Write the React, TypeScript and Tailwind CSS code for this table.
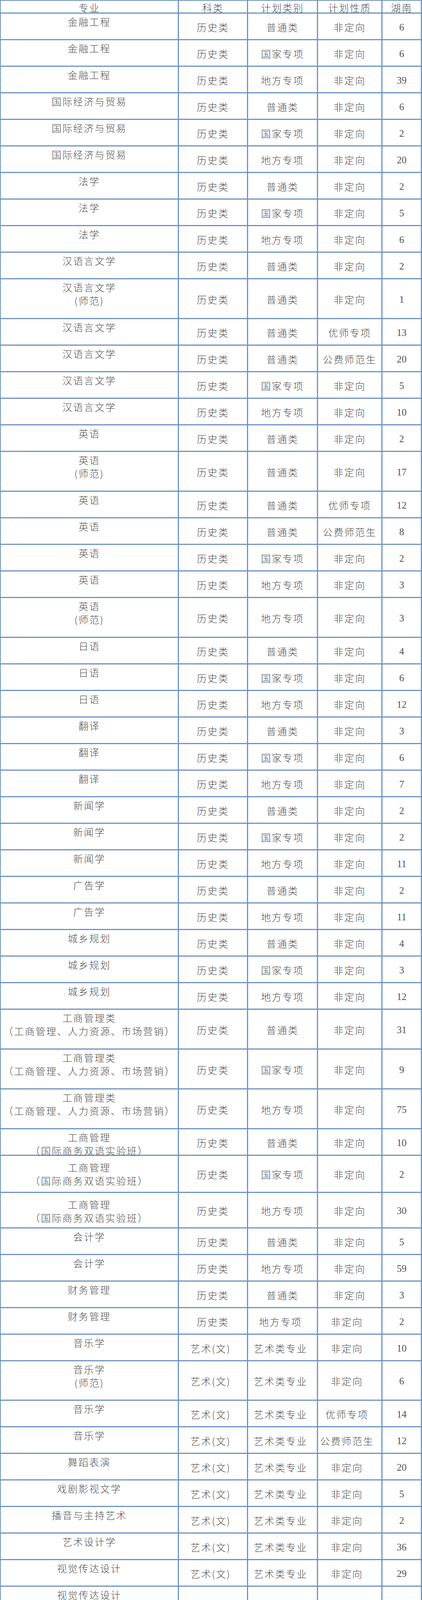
type Row = {
  name: string;
  sub?: string;
  kl: string;
  lb: string;
  xz: string;
  n: number;
  h?: number;
  lower?: boolean;
  shift?: "all" | "right";
};

const heightClass: Record<number, string> = {
  68: "h-[68px]",
  91: "h-[91px]",
  95: "h-[95px]",
  101: "h-[101px]",
  102: "h-[102px]",
};

const BIZ = "（工商管理、人力资源、市场营销）";
const INTL = "（国际商务双语实验班）";
const ART = "艺术(文)";
const ARTZ = "艺术类专业";
const PE = "体育(文)";

const rows: Row[] = [
  { name: "金融工程", kl: "历史类", lb: "普通类", xz: "非定向", n: 6 },
  { name: "金融工程", kl: "历史类", lb: "国家专项", xz: "非定向", n: 6 },
  { name: "金融工程", kl: "历史类", lb: "地方专项", xz: "非定向", n: 39 },
  { name: "国际经济与贸易", kl: "历史类", lb: "普通类", xz: "非定向", n: 6 },
  { name: "国际经济与贸易", kl: "历史类", lb: "国家专项", xz: "非定向", n: 2 },
  { name: "国际经济与贸易", kl: "历史类", lb: "地方专项", xz: "非定向", n: 20 },
  { name: "法学", kl: "历史类", lb: "普通类", xz: "非定向", n: 2 },
  { name: "法学", kl: "历史类", lb: "国家专项", xz: "非定向", n: 5 },
  { name: "法学", kl: "历史类", lb: "地方专项", xz: "非定向", n: 6 },
  { name: "汉语言文学", kl: "历史类", lb: "普通类", xz: "非定向", n: 2 },
  { name: "汉语言文学", sub: "(师范)", kl: "历史类", lb: "普通类", xz: "非定向", n: 1, h: 102 },
  { name: "汉语言文学", kl: "历史类", lb: "普通类", xz: "优师专项", n: 13 },
  { name: "汉语言文学", kl: "历史类", lb: "普通类", xz: "公费师范生", n: 20 },
  { name: "汉语言文学", kl: "历史类", lb: "国家专项", xz: "非定向", n: 5 },
  { name: "汉语言文学", kl: "历史类", lb: "地方专项", xz: "非定向", n: 10 },
  { name: "英语", kl: "历史类", lb: "普通类", xz: "非定向", n: 2 },
  { name: "英语", sub: "(师范)", kl: "历史类", lb: "普通类", xz: "非定向", n: 17, h: 102 },
  { name: "英语", kl: "历史类", lb: "普通类", xz: "优师专项", n: 12 },
  { name: "英语", kl: "历史类", lb: "普通类", xz: "公费师范生", n: 8 },
  { name: "英语", kl: "历史类", lb: "国家专项", xz: "非定向", n: 2 },
  { name: "英语", kl: "历史类", lb: "地方专项", xz: "非定向", n: 3 },
  { name: "英语", sub: "(师范)", kl: "历史类", lb: "地方专项", xz: "非定向", n: 3, h: 102 },
  { name: "日语", kl: "历史类", lb: "普通类", xz: "非定向", n: 4 },
  { name: "日语", kl: "历史类", lb: "国家专项", xz: "非定向", n: 6 },
  { name: "日语", kl: "历史类", lb: "地方专项", xz: "非定向", n: 12 },
  { name: "翻译", kl: "历史类", lb: "普通类", xz: "非定向", n: 3 },
  { name: "翻译", kl: "历史类", lb: "国家专项", xz: "非定向", n: 6 },
  { name: "翻译", kl: "历史类", lb: "地方专项", xz: "非定向", n: 7 },
  { name: "新闻学", kl: "历史类", lb: "普通类", xz: "非定向", n: 2 },
  { name: "新闻学", kl: "历史类", lb: "国家专项", xz: "非定向", n: 2 },
  { name: "新闻学", kl: "历史类", lb: "地方专项", xz: "非定向", n: 11 },
  { name: "广告学", kl: "历史类", lb: "普通类", xz: "非定向", n: 2 },
  { name: "广告学", kl: "历史类", lb: "地方专项", xz: "非定向", n: 11 },
  { name: "城乡规划", kl: "历史类", lb: "普通类", xz: "非定向", n: 4 },
  { name: "城乡规划", kl: "历史类", lb: "国家专项", xz: "非定向", n: 3 },
  { name: "城乡规划", kl: "历史类", lb: "地方专项", xz: "非定向", n: 12 },
  { name: "工商管理类", sub: BIZ, kl: "历史类", lb: "普通类", xz: "非定向", n: 31, h: 102 },
  { name: "工商管理类", sub: BIZ, kl: "历史类", lb: "国家专项", xz: "非定向", n: 9, h: 102 },
  { name: "工商管理类", sub: BIZ, kl: "历史类", lb: "地方专项", xz: "非定向", n: 75, h: 102 },
  { name: "工商管理", sub: INTL, kl: "历史类", lb: "普通类", xz: "非定向", n: 10 },
  { name: "工商管理", sub: INTL, kl: "历史类", lb: "国家专项", xz: "非定向", n: 2, h: 95, lower: true },
  { name: "工商管理", sub: INTL, kl: "历史类", lb: "地方专项", xz: "非定向", n: 30, h: 91, lower: true },
  { name: "会计学", kl: "历史类", lb: "普通类", xz: "非定向", n: 5 },
  { name: "会计学", kl: "历史类", lb: "地方专项", xz: "非定向", n: 59 },
  { name: "财务管理", kl: "历史类", lb: "普通类", xz: "非定向", n: 3 },
  { name: "财务管理", kl: "历史类", lb: "地方专项", xz: "非定向", n: 2, shift: "right" },
  { name: "音乐学", kl: ART, lb: ARTZ, xz: "非定向", n: 10, shift: "all" },
  { name: "音乐学", sub: "(师范)", kl: ART, lb: ARTZ, xz: "非定向", n: 6, h: 101, shift: "all" },
  { name: "音乐学", kl: ART, lb: ARTZ, xz: "优师专项", n: 14, shift: "all" },
  { name: "音乐学", kl: ART, lb: ARTZ, xz: "公费师范生", n: 12, shift: "all" },
  { name: "舞蹈表演", kl: ART, lb: ARTZ, xz: "非定向", n: 20, shift: "all" },
  { name: "戏剧影视文学", kl: ART, lb: ARTZ, xz: "非定向", n: 5, shift: "all" },
  { name: "播音与主持艺术", kl: ART, lb: ARTZ, xz: "非定向", n: 2, shift: "all" },
  { name: "艺术设计学", kl: ART, lb: ARTZ, xz: "非定向", n: 36, shift: "all" },
  { name: "视觉传达设计", kl: ART, lb: ARTZ, xz: "非定向", n: 29, shift: "all" },
  { name: "视觉传达设计", sub: "(中外合作办学)", kl: ART, lb: ARTZ, xz: "非定向", n: 57, h: 101, shift: "all" },
  { name: "环境设计", kl: ART, lb: ARTZ, xz: "非定向", n: 28, shift: "all" },
  { name: "产品设计", kl: ART, lb: ARTZ, xz: "非定向", n: 17, shift: "all" },
  { name: "服装与服饰设计", kl: ART, lb: ARTZ, xz: "非定向", n: 17, shift: "all" },
  { name: "数字媒体艺术", kl: ART, lb: ARTZ, xz: "非定向", n: 10, shift: "all" },
  { name: "陶瓷艺术设计", kl: ART, lb: ARTZ, xz: "非定向", n: 55, shift: "all" },
  { name: "包装设计", kl: ART, lb: ARTZ, xz: "非定向", n: 40, shift: "all" },
  { name: "体育教育", kl: PE, lb: "普通类", xz: "非定向", n: 28, shift: "all" },
  { name: "体育教育", kl: PE, lb: "普通类", xz: "优师专项", n: 7, shift: "all" },
  { name: "体育教育", kl: PE, lb: "普通类", xz: "公费师范生", n: 5, shift: "all" },
  { name: "社会体育指导与管理", kl: PE, lb: "普通类", xz: "非定向", n: 14, shift: "all" },
];

const cell = "flex items-center justify-center pt-[4px] whitespace-nowrap border-r-[3px] border-[#7094c0]";

export default function App() {
  return (
    <div className="w-[1080px] bg-white">
      <div className="flex w-[1080px] flex-col border-t-[2px] border-l-[2px] border-r-[3px] border-[#7094c0] bg-white font-['Noto_Sans_CJK_SC',sans-serif] text-[25px] font-light tracking-[2.5px] text-[#505050]">
        {/* header */}
        <div className="flex h-[33px] border-b-[3px] border-[#7094c0] leading-none">
          <div className={`${cell} w-[456px]`}>专业</div>
          <div className={`${cell} w-[177px]`}>科类</div>
          <div className={`${cell} w-[179px]`}>计划类别</div>
          <div className={`${cell} w-[165px]`}>计划性质</div>
          <div className="flex flex-1 items-center justify-center pt-[4px]">湖南</div>
        </div>

        {rows.map((r, i) => (
          <div key={i} className={`flex ${heightClass[r.h ?? 68]} border-b-[3px] border-[#7094c0]`}>
            <div
              className={`flex w-[456px] flex-col items-center whitespace-nowrap border-r-[3px] border-[#7094c0] leading-[34px] ${
                r.lower ? "pt-[12px]" : "pt-[3px]"
              }`}
            >
              <span>{r.name}</span>
              {r.sub && <span>{r.sub}</span>}
            </div>
            <div className={`${cell} w-[177px] ${r.shift === "all" ? "pr-[12px]" : ""}`}>{r.kl}</div>
            <div className={`${cell} w-[179px] ${r.shift ? "pr-[10px]" : ""}`}>{r.lb}</div>
            <div className={`${cell} w-[165px] ${r.shift ? "pr-[14px]" : ""}`}>{r.xz}</div>
            <div className="flex flex-1 items-center justify-center pt-[4px] font-['Liberation_Serif',serif] tracking-normal">
              {r.n}
            </div>
          </div>
        ))}
      </div>
    </div>
  );
}
